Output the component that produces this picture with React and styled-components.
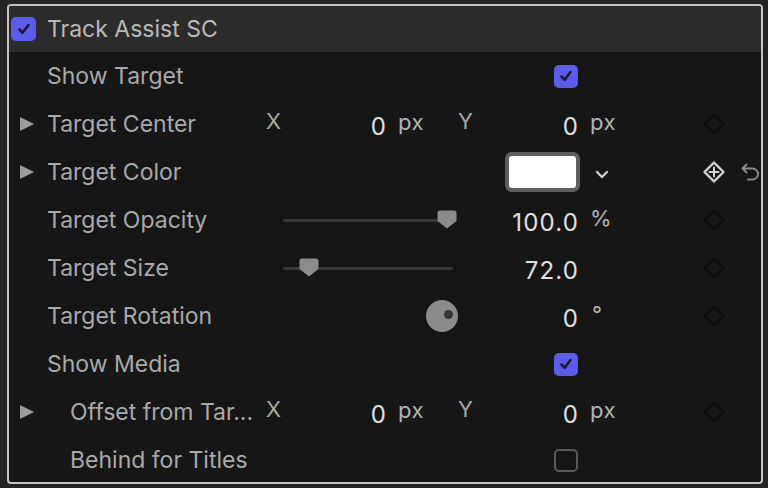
import React from 'react';
import styled, { createGlobalStyle } from 'styled-components';

const GlobalStyle = createGlobalStyle`
  html, body {
    margin: 0;
    padding: 0;
    background: #242424;
  }
  body {
    font-family: 'Inter', 'Liberation Sans', sans-serif;
    -webkit-font-smoothing: antialiased;
  }
`;

const Page = styled.div`
  width: 768px;
  height: 488px;
  padding: 4px 5px 0 7px;
  box-sizing: border-box;
`;

const Panel = styled.div`
  width: 756px;
  height: 480px;
  box-sizing: border-box;
  border: 2px solid #c2c2c2;
  border-radius: 4px;
  background: #161616;
  overflow: hidden;
`;

const Header = styled.div`
  height: 46px;
  background: #2b2b2b;
  display: flex;
  align-items: center;
  gap: 11px;
  padding-left: 2px;
  font-size: 23px;
  color: #bababa;
`;

const Row = styled.div`
  height: 48px;
  display: grid;
  grid-template-columns: 38px 210px 43px 86px 64px 42px 86px 112px 48px 1fr;
  align-items: center;
  font-size: 23px;
  color: #a9a9a9;
`;

const Disclosure = styled.div`
  grid-column: 1;
  width: 0;
  height: 0;
  margin-left: 11px;
  border-top: 7.5px solid transparent;
  border-bottom: 7.5px solid transparent;
  border-left: 14px solid #9a9a9a;
`;

const Label = styled.div`
  grid-column: 2;
  padding-left: ${({ $indent }) => ($indent ? '23px' : '0')};
  white-space: nowrap;
`;

const Axis = styled.div`
  grid-column: ${({ $col }) => $col};
  padding-left: ${({ $col }) => ($col === 3 ? '9px' : '8px')};
  margin-bottom: 6px;
  color: #a8a8a8;
  font-size: 22px;
`;

const Value = styled.div`
  grid-column: ${({ $col }) => $col};
  justify-self: end;
  color: #e2e2e2;
  font-size: 24px;
  letter-spacing: 1.2px;
  margin-right: -1.2px;
  margin-top: 5px;
`;

const Unit = styled.div`
  grid-column: ${({ $col }) => $col};
  padding-left: ${({ $pad }) => $pad || 12}px;
  margin-bottom: 4px;
  color: #b4b4b4;
  font-size: 22px;
  letter-spacing: 0.5px;
`;

const CheckBox = styled.div`
  grid-column: 7;
  justify-self: end;
  width: 24px;
  height: 23px;
  box-sizing: border-box;
  border-radius: 5px;
  background: ${({ $checked }) => ($checked ? '#5d5cea' : 'transparent')};
  border: ${({ $checked }) => ($checked ? 'none' : '2px solid #5a5a5a')};
  display: flex;
  align-items: center;
  justify-content: center;
`;

const HeaderCheck = styled(CheckBox)`
  width: 25px;
  height: 24px;
`;

const Swatch = styled.div`
  grid-column: 7;
  justify-self: end;
  margin-right: -2px;
  width: 75px;
  height: 40px;
  box-sizing: border-box;
  border: 4px solid #5f5f5f;
  border-radius: 7px;
  background: #686868;
  &::after {
    content: '';
    display: block;
    width: 100%;
    height: 100%;
    background: #ffffff;
    border-radius: 3px;
  }
`;

const Chevron = styled.div`
  grid-column: 8;
  padding-left: 17px;
  display: flex;
  align-items: center;
  margin-top: 4px;
`;

const Slider = styled.div`
  grid-column: 3 / 7;
  padding-left: 26px;
  display: flex;
  align-items: center;
`;

const Track = styled.div`
  width: 170px;
  height: 3px;
  background: #383838;
  border-radius: 2px;
  display: flex;
  align-items: center;
`;

const Thumb = styled.svg`
  margin-left: ${({ $at }) => $at}px;
  flex: none;
  margin-top: -2px;
`;

const Dial = styled.div`
  grid-column: 3 / 7;
  justify-self: end;
  margin-right: 34px;
  width: 32px;
  height: 32px;
  border-radius: 50%;
  background: #8b8b8b;
  display: flex;
  align-items: center;
  justify-content: flex-end;
  padding-right: 5px;
  box-sizing: border-box;
  &::after {
    content: '';
    width: 9px;
    height: 9px;
    border-radius: 50%;
    background: #353535;
    margin-top: -4px;
  }
`;

const Key = styled.div`
  grid-column: 9;
  justify-self: center;
  display: flex;
`;

const Reset = styled.div`
  grid-column: 10;
  display: flex;
  padding-left: 2px;
`;

const Check = ({ stroke = '#1a1a36' }) => (
  <svg width="16" height="16" viewBox="0 0 16 16">
    <path d="M3.5 8.5 L6.6 11.8 L12.5 4" fill="none" stroke={stroke} strokeWidth="2.6" strokeLinecap="round" strokeLinejoin="round" />
  </svg>
);

const Diamond = ({ add }) => (
  <svg width="24" height="24" viewBox="0 0 24 24">
    <path
      d="M12 2.5 L21.5 12 L12 21.5 L2.5 12 Z"
      fill="none"
      stroke={add ? '#d2d2d2' : '#0b0b0b'}
      strokeWidth={add ? 2.4 : 2}
      strokeLinejoin="round"
    />
    {add && (
      <path d="M12 7.5 V16.5 M7.5 12 H16.5" stroke="#d2d2d2" strokeWidth="2" strokeLinecap="round" />
    )}
  </svg>
);

const UndoIcon = () => (
  <svg width="22" height="22" viewBox="0 0 22 22">
    <path
      d="M6.5 3.5 L2.5 7.5 L6.5 11.5 M2.5 7.5 H12.5 A5.5 5.5 0 0 1 12.5 18.5 H8"
      fill="none"
      stroke="#8a8a8a"
      strokeWidth="2"
      strokeLinecap="round"
      strokeLinejoin="round"
    />
  </svg>
);

const ThumbShape = ({ at }) => (
  <Thumb $at={at} width="20" height="19" viewBox="0 0 20 19">
    <path d="M3 0.5 H17 A2.5 2.5 0 0 1 19.5 3 V11 L10 18.5 L0.5 11 V3 A2.5 2.5 0 0 1 3 0.5 Z" fill="#8c8c8c" />
  </Thumb>
);

const KeyCell = ({ add }) => (
  <Key>
    <Diamond add={add} />
  </Key>
);

const XY = ({ indent, label }) => (
  <Row>
    <Disclosure />
    <Label $indent={indent}>{label}</Label>
    <Axis $col={3}>X</Axis>
    <Value $col={4}>0</Value>
    <Unit $col={5}>px</Unit>
    <Axis $col={6}>Y</Axis>
    <Value $col={7}>0</Value>
    <Unit $col={8}>px</Unit>
    <KeyCell />
  </Row>
);

export default function App() {
  return (
    <Page>
      <GlobalStyle />
      <Panel>
        <Header>
          <HeaderCheck $checked>
            <Check />
          </HeaderCheck>
          Track Assist SC
        </Header>

        <Row>
          <Label>Show Target</Label>
          <CheckBox $checked>
            <Check />
          </CheckBox>
        </Row>

        <XY label="Target Center" />

        <Row>
          <Disclosure />
          <Label>Target Color</Label>
          <Swatch />
          <Chevron>
            <svg width="14" height="9" viewBox="0 0 14 9">
              <path d="M2 2 L7 7 L12 2" fill="none" stroke="#cfcfcf" strokeWidth="2.4" strokeLinecap="round" strokeLinejoin="round" />
            </svg>
          </Chevron>
          <KeyCell add />
          <Reset>
            <UndoIcon />
          </Reset>
        </Row>

        <Row>
          <Label>Target Opacity</Label>
          <Slider>
            <Track>
              <ThumbShape at={154} />
            </Track>
          </Slider>
          <Value $col={7}>100.0</Value>
          <Unit $col={8}>%</Unit>
          <KeyCell />
        </Row>

        <Row>
          <Label>Target Size</Label>
          <Slider>
            <Track>
              <ThumbShape at={16} />
            </Track>
          </Slider>
          <Value $col={7}>72.0</Value>
          <KeyCell />
        </Row>

        <Row>
          <Label>Target Rotation</Label>
          <Dial />
          <Value $col={7}>0</Value>
          <Unit $col={8} $pad={14}>°</Unit>
          <KeyCell />
        </Row>

        <Row>
          <Label>Show Media</Label>
          <CheckBox $checked>
            <Check />
          </CheckBox>
        </Row>

        <XY indent label="Offset from Tar..." />

        <Row>
          <Label $indent>Behind for Titles</Label>
          <CheckBox />
        </Row>
      </Panel>
    </Page>
  );
}
